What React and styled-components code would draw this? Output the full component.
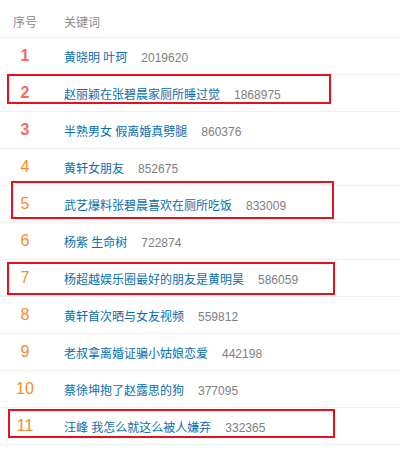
import React from 'react'
import styled, { createGlobalStyle } from 'styled-components'

const GlobalStyle = createGlobalStyle`
    body {
        margin: 0;
        background: #fff;
        font-family: "Liberation Sans", "Noto Sans CJK SC", sans-serif;
    }
`

const Table = styled.div`
    width: 400px;
`

const HeaderRow = styled.div`
    display: flex;
    height: 38px;
    padding-top: 8px;
    box-sizing: border-box;
    border-bottom: 1px solid #f0f0f0;
    font-size: 12px;
    line-height: 30px;
    color: #8a8a8a;
`

const Row = styled.div`
    position: relative;
    display: flex;
    align-items: center;
    height: 37px;
    box-sizing: border-box;
    border-bottom: 1px solid #f0f0f0;
`

const RankCell = styled.div`
    width: 50px;
    flex: none;
    text-align: center;
`

const Rank = styled(RankCell)`
    font-size: 16px;
    font-weight: ${p => (p.$top ? 'bold' : 'normal')};
    color: ${p => (p.$top ? '#f26d5f' : '#f88b2b')};
`

const Keyword = styled.div`
    padding-left: 14px;
    font-size: 12px;
    white-space: nowrap;
`

const Link = styled.span`
    color: #0a6db0;
`

const Count = styled.span`
    margin-left: 14px;
    color: #808080;
`

const Highlight = styled.div`
    position: absolute;
    left: ${p => p.$left}px;
    top: ${p => p.$top}px;
    width: ${p => p.$width}px;
    height: ${p => p.$height}px;
    border: 2px solid #e8101a;
    box-sizing: border-box;
    pointer-events: none;
`

const items = [
    { word: '黄晓明 叶珂', count: '2019620' },
    { word: '赵丽颖在张碧晨家厕所睡过觉', count: '1868975', box: [7, -1, 324, 30] },
    { word: '半熟男女 假离婚真劈腿', count: '860376' },
    { word: '黄轩女朋友', count: '852675' },
    { word: '武艺爆料张碧晨喜欢在厕所吃饭', count: '833009', box: [11, -5, 323, 38] },
    { word: '杨紫 生命树', count: '722874' },
    { word: '杨超越娱乐圈最好的朋友是黄明昊', count: '586059', box: [7, 2, 328, 33] },
    { word: '黄轩首次晒与女友视频', count: '559812' },
    { word: '老叔拿离婚证骗小姑娘恋爱', count: '442198' },
    { word: '蔡徐坤抱了赵露思的狗', count: '377095' },
    { word: '汪峰 我怎么就这么被人嫌弃', count: '332365', box: [8, 1, 327, 29] },
]

export default function App() {
    return (
        <>
            <GlobalStyle />
            <Table>
                <HeaderRow>
                    <RankCell>序号</RankCell>
                    <Keyword>关键词</Keyword>
                </HeaderRow>
                {items.map((item, i) => (
                    <Row key={i}>
                        <Rank $top={i < 3}>{i + 1}</Rank>
                        <Keyword>
                            <Link>{item.word}</Link>
                            <Count>{item.count}</Count>
                        </Keyword>
                        {item.box && (
                            <Highlight
                                $left={item.box[0]}
                                $top={item.box[1]}
                                $width={item.box[2]}
                                $height={item.box[3]}
                            />
                        )}
                    </Row>
                ))}
            </Table>
        </>
    )
}
